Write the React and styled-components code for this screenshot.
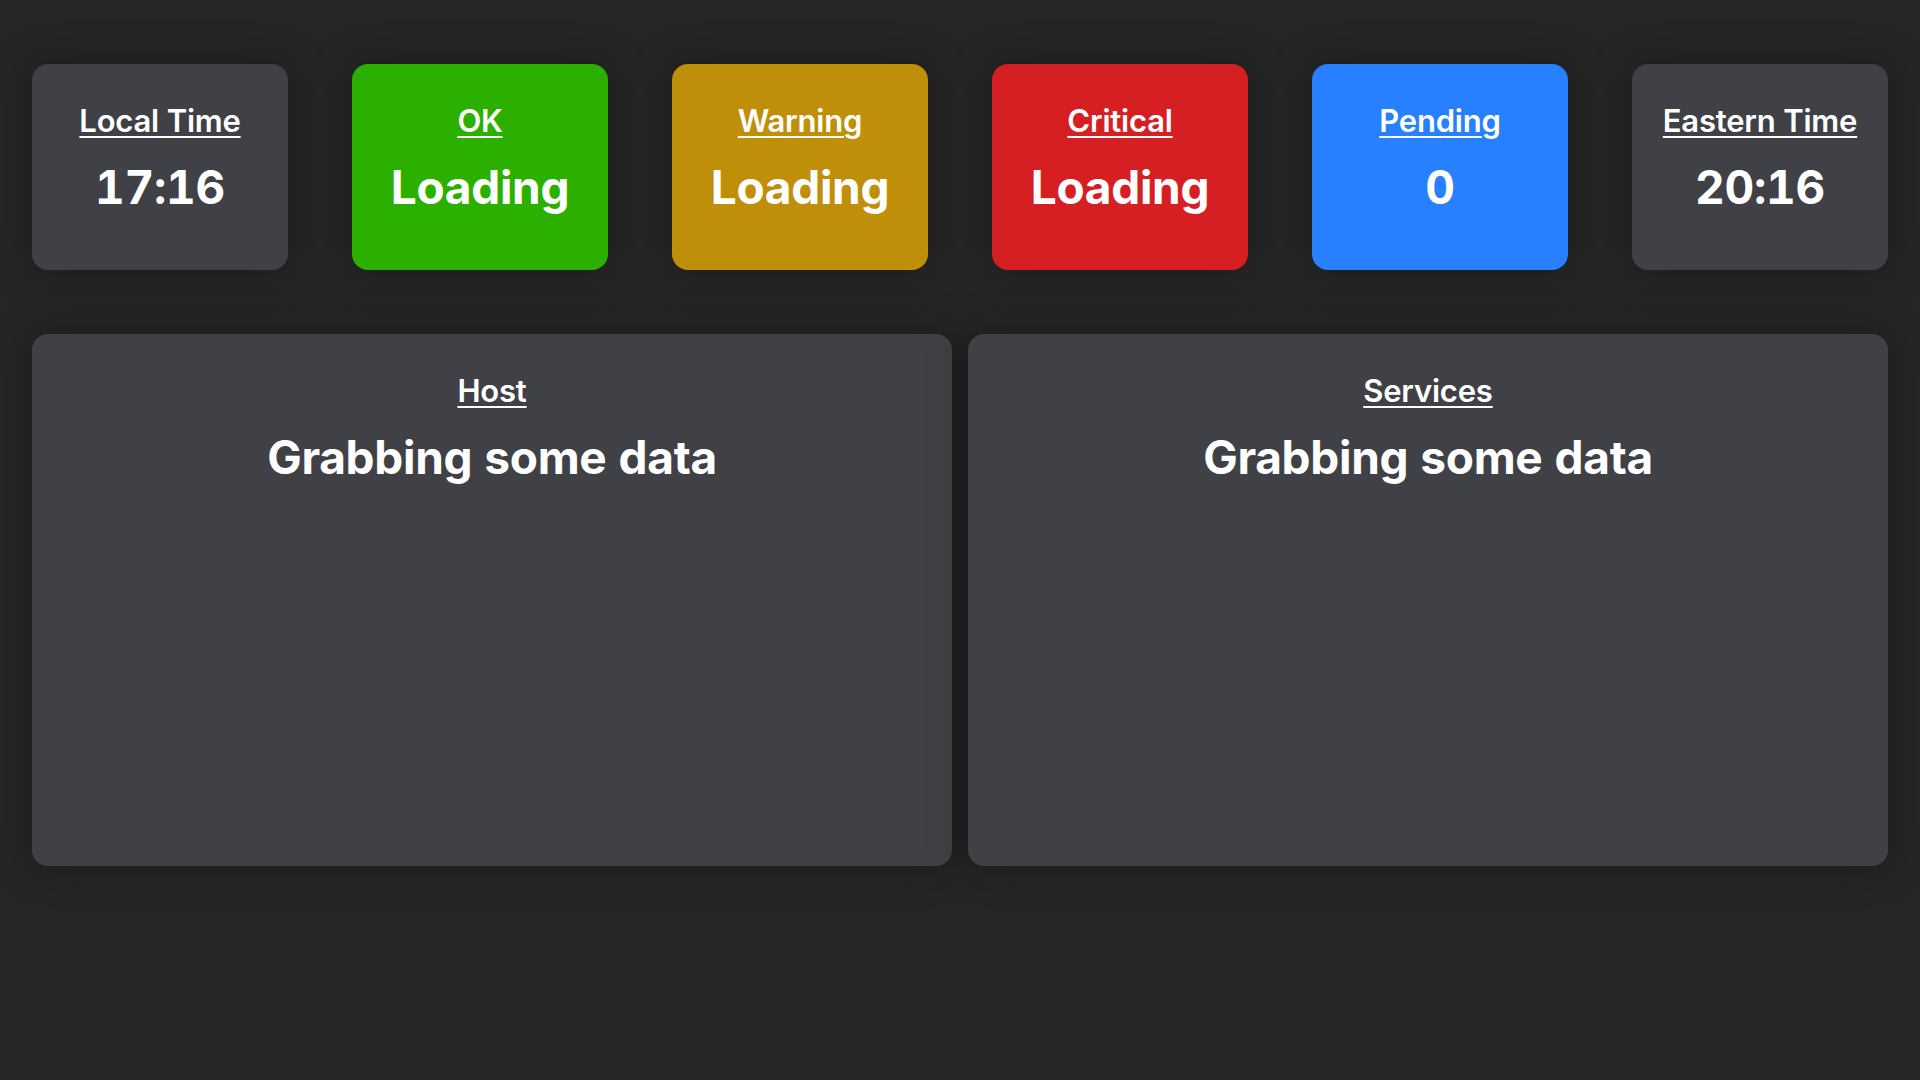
import React from "react";
import styled, { createGlobalStyle } from "styled-components";

const Global = createGlobalStyle`
  html, body { margin: 0; padding: 0; background: #262626; }
  body { font-family: Inter, "Noto Sans", sans-serif; color: #fff; }
`;

const Page = styled.div`
  width: 1920px;
  height: 1080px;
  box-sizing: border-box;
  padding: 64px 32px 0;
  display: flex;
  flex-direction: column;
  gap: 64px;
  background: #262626;
`;

const StatRow = styled.div`
  display: flex;
  justify-content: space-between;
`;

const Card = styled.div`
  width: 256px;
  height: 206px;
  box-sizing: border-box;
  padding-top: 37px;
  border-radius: 16px;
  background: ${(p) => p.$bg};
  box-shadow: 0 0 40px rgba(0, 0, 0, 0.35);
  display: flex;
  flex-direction: column;
  align-items: center;
  text-align: center;
`;

const Label = styled.div`
  font-size: 31px;
  font-weight: 600;
  line-height: 39px;
  text-decoration: underline;
  text-decoration-thickness: 2px;
  text-underline-offset: 4px;
  letter-spacing: -0.2px;
`;

const Value = styled.div`
  margin-top: 18px;
  font-size: 46px;
  font-weight: 700;
  line-height: 58px;
  letter-spacing: -0.3px;
  font-variant-numeric: tabular-nums;
`;

const PanelRow = styled.div`
  display: grid;
  grid-template-columns: 1fr 1fr;
  gap: 16px;
`;

const Panel = styled.div`
  height: 532px;
  box-sizing: border-box;
  padding-top: 37px;
  border-radius: 16px;
  background: #404146;
  box-shadow: 0 0 40px rgba(0, 0, 0, 0.35);
  display: flex;
  flex-direction: column;
  align-items: center;
`;

const cards = [
  { label: "Local Time", value: "17:16", bg: "#404146" },
  { label: "OK", value: "Loading", bg: "#2cb000" },
  { label: "Warning", value: "Loading", bg: "#bf8f0a" },
  { label: "Critical", value: "Loading", bg: "#d61f23" },
  { label: "Pending", value: "0", bg: "#2680ff" },
  { label: "Eastern Time", value: "20:16", bg: "#404146" },
];

export default function App() {
  return (
    <>
      <Global />
      <Page>
        <StatRow>
          {cards.map((c) => (
            <Card key={c.label} $bg={c.bg}>
              <Label>{c.label}</Label>
              <Value>{c.value}</Value>
            </Card>
          ))}
        </StatRow>
        <PanelRow>
          <Panel>
            <Label>Host</Label>
            <Value>Grabbing some data</Value>
          </Panel>
          <Panel>
            <Label>Services</Label>
            <Value>Grabbing some data</Value>
          </Panel>
        </PanelRow>
      </Page>
    </>
  );
}
